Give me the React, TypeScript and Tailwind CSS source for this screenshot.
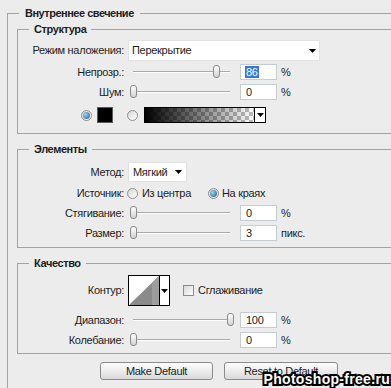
import React from 'react';

const Label = ({ children }: { children: React.ReactNode }) => (
  <span className="w-[106px] shrink-0 text-right">{children}</span>
);

const Arrow = () => (
  <svg width="7" height="4" viewBox="0 0 7 4">
    <polygon points="0,0 7,0 3.5,4" fill="#000" />
  </svg>
);

const Radio = ({ on }: { on?: boolean }) => (
  <span className="w-[11px] h-[11px] shrink-0 rounded-full border border-[#8f8f8f] bg-linear-to-br from-[#d6d6d6] to-white flex items-center justify-center">
    {on && (
      <span className="w-[7px] h-[7px] rounded-full bg-[radial-gradient(circle_at_35%_35%,#9fd0f0,#1d5a8e)]" />
    )}
  </span>
);

const Slider = ({ value }: { value: number }) => (
  <div className="relative ml-[4px] w-[107px] h-[16px] shrink-0">
    <div className="absolute left-[5px] right-[5px] top-[7px] h-[2px] border-t border-t-[#a9a9a9] border-b border-b-white" />
    <div
      className="absolute top-[1px] w-[7px] h-[13px] rounded-[3px] border border-[#8a8a8a] bg-linear-to-b from-white to-[#d2d2d2]"
      style={{ left: Math.round(5 + value * 0.97 - 3.5) }}
    />
  </div>
);

const NumBox = ({ value, selected }: { value: string; selected?: boolean }) => (
  <div className="ml-[5px] w-[37px] h-[16px] shrink-0 bg-white border border-[#c4ccd4] pl-[4px] flex items-center">
    {selected ? (
      <span className="bg-[#3a78d6] text-white leading-[12px] px-[1px]">{value}</span>
    ) : (
      <span className="pl-[1px]">{value}</span>
    )}
  </div>
);

const SliderRow = ({
  label,
  value,
  text,
  unit,
  selected,
  className,
}: {
  label: string;
  value: number;
  text: string;
  unit: string;
  selected?: boolean;
  className: string;
}) => (
  <div className={`flex items-center h-[16px] ${className}`}>
    <Label>{label}</Label>
    <Slider value={value} />
    <NumBox value={text} selected={selected} />
    <span className="ml-[4px]">{unit}</span>
  </div>
);

const Group = ({
  title,
  className,
  children,
}: {
  title: string;
  className: string;
  children: React.ReactNode;
}) => (
  <fieldset className={`ml-[9px] border border-[#a3a3a3] p-0 ${className}`}>
    <legend className="ml-[11px] px-[5px] leading-[14px] font-bold tracking-[-0.4px]">{title}</legend>
    {children}
  </fieldset>
);

export default function App() {
  return (
    <div className="relative w-[391px] h-[388px] overflow-hidden bg-[#ececec] text-[11px] tracking-[-0.3px] text-[#1c1c1c] font-['Liberation_Sans',Arial,sans-serif]">
      <fieldset className="mt-[6px] ml-[7px] w-[440px] h-[420px] border-t border-l border-[#a3a3a3] p-0">
        <legend className="ml-[11px] px-[6px] leading-[14px] font-bold tracking-[-0.5px]">Внутреннее свечение</legend>

        <Group title="Структура" className="mt-[2px] pt-[4px] pb-[10px]">
          <div className="flex items-center h-[21px]">
            <Label>Режим наложения:</Label>
            <div className="ml-[4px] w-[192px] h-[21px] bg-white border border-[#e2e2e2] flex items-center justify-between pl-[3px] pr-[3px]">
              <span>Перекрытие</span>
              <Arrow />
            </div>
          </div>
          <SliderRow label="Непрозр.:" value={86} text="86" unit="%" selected className="mt-[3px]" />
          <SliderRow label="Шум:" value={0} text="0" unit="%" className="mt-[4px]" />
          <div className="mt-[7px] h-[16px] flex items-center pl-[63px]">
            <Radio on />
            <span className="ml-[5px] w-[16px] h-[16px] bg-black border border-[#5a5a5a]" />
            <span className="ml-[14px]">
              <Radio />
            </span>
            <div className="ml-[6px] w-[122px] h-[16px] border border-black flex">
              <div className="flex-1 bg-[image:linear-gradient(to_right,#000,rgba(0,0,0,0)),repeating-conic-gradient(#bdbdbd_0_25%,#fff_0_50%)] bg-size-[100%_100%,8px_8px]" />
              <div className="w-[11px] border-l border-black bg-white flex items-center justify-center">
                <Arrow />
              </div>
            </div>
          </div>
        </Group>

        <Group title="Элементы" className="mt-[8px] pt-[6px] pb-[6px]">
          <div className="flex items-center h-[20px]">
            <Label>Метод:</Label>
            <div className="ml-[4px] w-[59px] h-[20px] bg-white border border-[#e2e2e2] flex items-center justify-between pl-[4px] pr-[4px]">
              <span>Мягкий</span>
              <Arrow />
            </div>
          </div>
          <div className="mt-[4px] h-[14px] flex items-center">
            <Label>Источник:</Label>
            <span className="ml-[3px]">
              <Radio />
            </span>
            <span className="ml-[4px]">Из центра</span>
            <span className="ml-[17px]">
              <Radio on />
            </span>
            <span className="ml-[3px]">На краях</span>
          </div>
          <SliderRow label="Стягивание:" value={0} text="0" unit="%" className="mt-[5px]" />
          <SliderRow label="Размер:" value={0} text="3" unit="пикс." className="mt-[4px]" />
        </Group>

        <Group title="Качество" className="mt-[8px] pt-[5px] pb-[5px]">
          <div className="flex items-center h-[31px]">
            <Label>Контур:</Label>
            <div className="ml-[4px] w-[42px] h-[31px] border border-black bg-white flex">
              <svg width="30" height="29" viewBox="0 0 30 29" className="shrink-0">
                <polygon points="0,29 30,0 30,29" fill="#8a8a8a" />
                <polygon points="23,7 30,0 30,29 23,29" fill="#9e9e9e" />
              </svg>
              <div className="flex-1 border-l border-black flex items-center justify-center">
                <Arrow />
              </div>
            </div>
            <span className="ml-[13px] w-[11px] h-[11px] border border-[#8c8c8c] bg-linear-to-br from-[#d8d8d8] to-white" />
            <span className="ml-[4px]">Сглаживание</span>
          </div>
          <SliderRow label="Диапазон:" value={100} text="100" unit="%" className="mt-[6px]" />
          <SliderRow label="Колебание:" value={0} text="0" unit="%" className="mt-[4px]" />
        </Group>

        <div className="mt-[8px] ml-[92px] flex gap-[11px]">
          <button className="w-[113px] h-[18px] rounded-[3px] border border-[#8a8a8a] bg-linear-to-b from-white to-[#d9d9d9] text-[11px] leading-[16px]">
            Make Default
          </button>
          <button className="w-[114px] h-[18px] rounded-[3px] border border-[#8a8a8a] bg-linear-to-b from-white to-[#d9d9d9] text-[11px] leading-[16px]">
            Reset to Default
          </button>
        </div>
      </fieldset>

      <div className="absolute right-[1px] bottom-[0px] text-[14px] leading-[17px] font-bold text-white tracking-[0.3px] [-webkit-text-stroke:4px_#000] [paint-order:stroke_fill]">
        Photoshop-free.ru
      </div>
    </div>
  );
}
